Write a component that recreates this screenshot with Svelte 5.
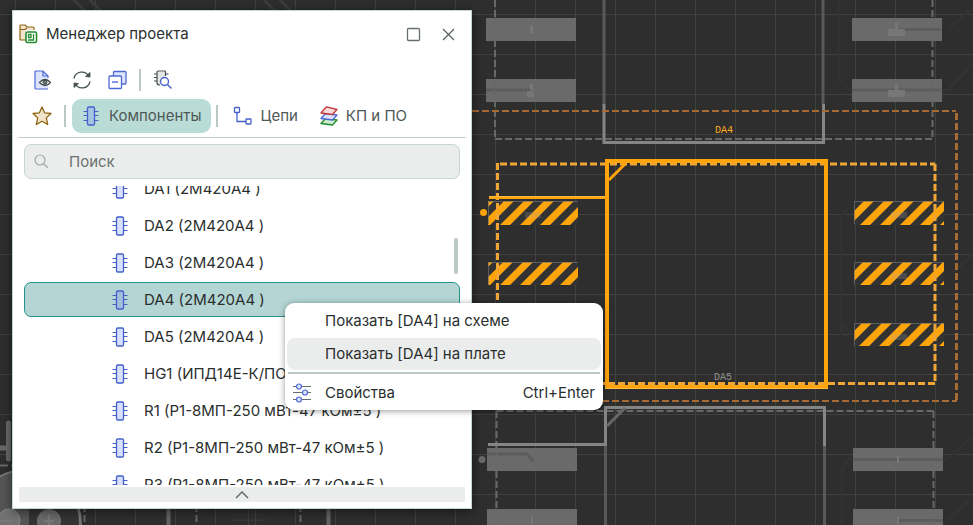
<script>
  const rows = [
    'DA1 (2М420А4 )',
    'DA2 (2М420А4 )',
    'DA3 (2М420А4 )',
    'DA4 (2М420А4 )',
    'DA5 (2М420А4 )',
    'HG1 (ИПД14Е-К/ПО )',
    'R1 (Р1-8МП-250 мВт-47 кОм±5 )',
    'R2 (Р1-8МП-250 мВт-47 кОм±5 )',
    'R3 (Р1-8МП-250 мВт-47 кОм±5 )'
  ];
  let selected = $state(3);
  let query = $state('');

  const greyPads = [
    [486, 18], [486, 79], [852, 18], [852, 79],
    [487, 448], [487, 509], [853, 448], [853, 509]
  ];
  const activePads = [[488, 201], [488, 262], [854, 201], [854, 262], [854, 323]];
</script>

{#snippet chip()}
  <svg width="16" height="20" viewBox="0 0 16 20" fill="none" stroke="#4560cb" aria-hidden="true">
    <path d="M0.5 5.5H4M0.5 9.5H4M0.5 14.5H4M12 5.5h3.5M12 9.5h3.5M12 14.5h3.5" stroke-width="1.2" />
    <rect x="4.5" y="1" width="7" height="18" rx="1.2" fill="#6f8dfa" fill-opacity=".28" stroke-width="1.3" />
  </svg>
{/snippet}

<main>
  <svg class="board" width="100%" height="100%" aria-hidden="true">
    <defs>
      <pattern id="grid" x="15" y="14" width="40" height="40" patternUnits="userSpaceOnUse">
        <path d="M0.5 0V40M0 0.5H40" stroke="#414141" />
      </pattern>
      <pattern id="hatch" width="20" height="20" patternUnits="userSpaceOnUse">
        <rect width="20" height="20" fill="#333" />
        <path d="M5 0H15L0 15V5ZM20 5V15L15 20H5Z" fill="#ffa40a" />
      </pattern>
    </defs>
    <rect width="100%" height="100%" fill="#2e2e2e" />
    <rect width="100%" height="100%" fill="url(#grid)" />

    <g fill="none" stroke="#323232" stroke-width="3">
      <path d="M839 0V80L849 90H948L973 63M948 29L973 8M841 335V215L848 208M841 325L854 335M950 275L973 254M842 525V468L850 459H948L973 436M948 520L973 497" />
      <path d="M74 0L96 22M90 0L112 22M264 0L276 12M280 0L292 12" stroke="#3d3d3d" />
    </g>

    <g>
      <path d="M0 448H8" stroke="#696969" stroke-width="5" />
      <path d="M8.5 423V459" stroke="#696969" stroke-width="5" stroke-linecap="round" />
      <path d="M0 465.500H13" stroke="#666" stroke-width="2" stroke-dasharray="8 3" />
      <circle cx="26" cy="525" r="55" fill="#555" stroke="#777" stroke-width="2" />
      <rect x="29" y="505" width="38" height="20" fill="#343434" />
      <circle cx="9" cy="520" r="11" fill="#727272" stroke="#858585" />
      <circle cx="49" cy="521" r="11.500" fill="#6a6a6a" stroke="#747474" />
      <path d="M0 521H12M49 514V525M44 521H54" stroke="#787878" stroke-width="2" />
      <path d="M67 505H77Q80 513 80 525H67Z" fill="#343434" />
      <path d="M77 505Q80 513 80 525" fill="none" stroke="#777" stroke-width="2" />
      <path d="M168.500 505V525M328.500 505V525" stroke="#636363" stroke-width="4" />
      <path d="M84.500 505V525M196.500 505V525M300.500 505V525" stroke="#666" stroke-width="2" stroke-dasharray="7 3" />
      <path d="M232 520H265M248.500 505V525" stroke="#3c3c3c" />
    </g>

    {#each greyPads as [x, y]}
      <rect {x} {y} width="90" height="23" fill="#6a6a6a" />
    {/each}
    <g fill="none" stroke="#5c5c5c" stroke-width="3">
      <path d="M486 90H531M895 29.500H941M852 90H941M487 454H527L533 461M853 459.500H943M898 520.500H943" />
    </g>
    <g fill="#777">
      <path d="M530 26h3v7h-3zM530 84h3v6h-3zM527 91h7v6h-7zM888 29h17v7h-17zM895 23h3v6h-3zM888 90h17v7h-17zM895 84h3v6h-3zM897 456h2v7h-2zM897 517h2v7h-2zM531 517h2v7h-2z" />
    </g>

    <g fill="none" stroke="#686868" stroke-width="2" stroke-dasharray="7 3">
      <path d="M495 0V138M495 139H933M932.500 0V138" />
      <path d="M496.500 411V525M496.500 411H934M933.500 411V525" />
    </g>
    <g fill="none" stroke="#595959" stroke-width="3">
      <path d="M604 0V104M823 0V104M605.500 445V525M824.500 445V525" />
    </g>
    <g fill="none" stroke="#858585" stroke-width="3">
      <path d="M604 104V142.500H823.500V104" />
      <path d="M488 444.500H605.500V407.500H824.500V446" />
      <path d="M625 408L607 426" stroke="#686868" />
    </g>
    <circle cx="482" cy="459.500" r="3.500" fill="#6a6a6a" />

    <g fill="none" stroke="#a66b32" stroke-width="2" stroke-dasharray="7 3">
      <path d="M472 111H956M472 401H957" />
      <path d="M956.500 113V401" stroke-width="3" />
    </g>

    {#each activePads as [x, y]}
      <rect {x} {y} width="90" height={y === 201 ? 24 : 23} fill="url(#hatch)" />
      <path d="M{x + 0.5} {y + 23}V{y + 0.5}H{x + 90}" fill="none" stroke="#707070" stroke-opacity=".7" />
    {/each}
    <path d="M525 212h16v6h-16zM891 212h16v6h-16zM891 273h16v6h-16zM891 334h16v6h-16z" fill="#aaa" fill-opacity=".22" />

    <g fill="none" stroke="#f0a535" stroke-width="3" stroke-dasharray="7 3">
      <path d="M500 164H935M935 164V384M497.500 163V384M498 383.500H935" />
    </g>
    <g fill="none" stroke="#ffa40a" stroke-width="3">
      <path d="M607 161H826V387H607Z" stroke-width="4" />
      <path d="M489 197.500H607M626 163L609 180" />
      <path d="M489 196.500H605M605 388.500H828" stroke="#ffb840" stroke-width="1" />
    </g>
    <circle cx="483.500" cy="212.500" r="3.500" fill="#ffa40a" />
    <text x="715" y="133" fill="#ffab24">DA4</text>
    <text x="714" y="380" fill="#929292">DA5</text>
  </svg>

  <section class="window" aria-label="Менеджер проекта">
    <header>
      <svg width="20" height="20" viewBox="0 0 20 20" fill="none" aria-hidden="true">
        <path d="M1 3V16H7V6H15V3H8L6 1H2Z" fill="#f1e4cd" stroke="none" />
        <path d="M7 16H2Q1 16 1 15V2Q1 1 2 1H6L8 3H14Q15 3 15 4V6M1 5.500H6L8 4" stroke="#8e6414" stroke-width="1.200" />
        <rect x="7" y="8" width="10.500" height="10.500" rx="1.500" fill="#fff" stroke="#248b2e" stroke-width="1.600" />
        <path d="M9.500 10.500H12V13.500H9.500ZM14.500 10V16H9" stroke="#248b2e" stroke-width="1.300" />
      </svg>
      <h1>Менеджер проекта</h1>
      <button aria-label="Развернуть">
        <svg width="15" height="15" viewBox="0 0 15 15" fill="none"><rect x="1.500" y="1.500" width="12" height="12" rx="1" stroke="#66706e" stroke-width="1.300" /></svg>
      </button>
      <button aria-label="Закрыть">
        <svg width="15" height="15" viewBox="0 0 15 15" fill="none"><path d="M2 2L13 13M13 2L2 13" stroke="#56605e" stroke-width="1.200" /></svg>
      </button>
    </header>

    <div class="tools">
      <button aria-label="Просмотр">
        <svg width="18" height="20" viewBox="0 0 18 20" fill="none">
          <path d="M2 2Q2 1 3 1H10L15 6V19H3Q2 19 2 18Z" fill="#dde4fd" />
          <path d="M15 8V6L10 1H3Q2 1 2 2V18Q2 19 3 19H15M10 1V6H15" stroke="#4d68d2" stroke-width="1.200" />
          <path d="M6.500 12.500Q12 6.500 17.500 12.500Q12 18.500 6.500 12.500Z" fill="#fff" stroke="#3d4745" stroke-width="1.300" />
          <circle cx="12" cy="12.300" r="2" fill="#727b79" stroke="#3d4745" />
        </svg>
      </button>
      <button aria-label="Обновить">
        <svg width="20" height="20" viewBox="0 0 20 20" fill="none" stroke="#46524f" stroke-width="1.300">
          <path d="M2 8.500A8 8 0 0 1 17 6.500M18 11.500A8 8 0 0 1 3 13.500" />
          <path d="M18 2.500V7L13.500 6.500ZM2 17.500V13L6.500 13.500Z" fill="#46524f" stroke-width=".8" />
        </svg>
      </button>
      <button aria-label="Свернуть все">
        <svg width="20" height="20" viewBox="0 0 20 20" fill="none" stroke="#4d68d2" stroke-width="1.300">
          <rect x="5.500" y="1.500" width="12.500" height="12.500" rx="1" fill="#dde4fd" />
          <rect x="1" y="6" width="12.500" height="12.500" rx="1" fill="#fff" />
          <path d="M4 12H10" stroke-width="1.400" />
        </svg>
      </button>
      <i></i>
      <button aria-label="Найти компонент">
        <svg width="19" height="20" viewBox="0 0 19 20" fill="none" stroke="#46524f" stroke-width="1.200">
          <path d="M4 2H12V7L8 14H4Z" fill="#e3e6e5" stroke="none" />
          <path d="M12.500 6V2Q12.500 1 11.500 1H5Q4 1 4 2V13Q4 15 7 15M1 4H4M1 7.500H4M1 11H4M12.500 4h3" />
          <circle cx="11.500" cy="11.500" r="4" fill="#fff" stroke="#4560cb" stroke-width="1.400" />
          <path d="M14.500 14.500L18.500 18.500" stroke="#4560cb" stroke-width="1.400" />
        </svg>
      </button>
    </div>

    <nav>
      <button class="star" aria-label="Избранное">
        <svg width="20" height="20" viewBox="0 0 20 20"><path d="M10 1L12.700 6.900L19 7.500L14.300 11.900L15.700 18.500L10 15.200L4.300 18.500L5.700 11.900L1 7.500L7.300 6.900Z" fill="#f0e5cc" stroke="#8e6414" stroke-width="1.300" stroke-linejoin="round" /></svg>
      </button>
      <i></i>
      <button class="tab current">{@render chip()}Компоненты</button>
      <i></i>
      <button class="tab nets">
        <svg width="20" height="20" viewBox="0 0 20 20" fill="#fff" stroke="#4560cb" stroke-width="1.300">
          <path d="M4 7V15.500H13" fill="none" />
          <rect x="1.500" y="1.500" width="5" height="5" rx=".8" />
          <rect x="13" y="13" width="5" height="5" rx=".8" />
        </svg>Цепи
      </button>
      <button class="tab">
        <svg width="18" height="20" viewBox="0 0 18 20" stroke-width="1.300" stroke-linejoin="round">
          <path d="M5.500 12.500L17 14L12.500 19L1 17.500Z" fill="#cdebd0" stroke="#248b2e" />
          <path d="M5.500 7.500L17 9L12.500 14L1 12.500Z" fill="#dbe2fd" stroke="#4d68d2" />
          <path d="M6.500 .8L17 3.500L12.500 8.500L1 7Z" fill="#fbdada" stroke="#c03b3b" />
        </svg>КП и ПО
      </button>
    </nav>

    <label class="search">
      <svg width="15" height="15" viewBox="0 0 15 15" fill="none" stroke="#a0abaa" stroke-width="1.200" aria-hidden="true"><circle cx="6" cy="6" r="5" /><path d="M9.500 9.500L14 14" /></svg>
      <input type="text" placeholder="Поиск" aria-label="Поиск" bind:value={query} />
    </label>

    <div class="list">
      <ul>
        {#each rows as row, i}
          <li>
            <button class="row" class:selected={selected === i} onclick={() => (selected = i)}>{@render chip()}{row}</button>
          </li>
        {/each}
      </ul>
      <span class="thumb"></span>
    </div>

    <button class="collapse" aria-label="Свернуть панель">
      <svg width="14" height="8" viewBox="0 0 14 8" fill="none"><path d="M1 7L7 1L13 7" stroke="#66706e" stroke-width="1.500" /></svg>
    </button>
  </section>

  <div class="menu" role="menu">
    <button role="menuitem">Показать [DA4] на схеме</button>
    <button role="menuitem" class="hover">Показать [DA4] на плате</button>
    <hr />
    <button role="menuitem">
      <svg width="20" height="20" viewBox="0 0 20 20" stroke-width="1.200" aria-hidden="true">
        <path d="M1 3.500H19M1 9.500H19M1 16.500H19" stroke="#66706e" />
        <g fill="#dbe2fd" stroke="#4d68d2"><circle cx="7" cy="3.500" r="2.500" /><circle cx="13" cy="9.500" r="2.500" /><circle cx="7" cy="16.500" r="2.500" /></g>
      </svg>
      <span>Свойства</span>
      <kbd>Ctrl+Enter</kbd>
    </button>
  </div>
</main>

<style>
  main {
    position: relative;
    height: 100vh;
    overflow: hidden;
    background: #2e2e2e;
    color: #2a2f2e;
    font: 400 15px/20px Inter, "Noto Sans", sans-serif;
  }
  button {
    margin: 0;
    padding: 0;
    border: 0;
    background: none;
    color: inherit;
    font: inherit;
    display: flex;
    align-items: center;
    text-align: left;
  }
  svg { flex: none; display: block; }
  .board { position: absolute; inset: 0; }
  .board text { font: 10px "Liberation Mono", monospace; }

  .window {
    position: absolute;
    left: 12px;
    top: 10px;
    bottom: 16px;
    width: 460px;
    box-sizing: border-box;
    display: flex;
    flex-direction: column;
    padding: 0 6px 6px;
    border: 1px solid #c4d6d0;
    background: #fff;
    box-shadow: 0 2px 10px #0008;
  }
  header {
    display: flex;
    align-items: center;
    gap: 20px;
    height: 46px;
    padding: 0 9px 0 0;
  }
  h1 {
    flex: 1;
    margin: 0 0 0 -13px;
    font-size: 15px;
    font-weight: 400;
  }
  .tools {
    display: flex;
    align-items: center;
    gap: 16px;
    height: 38px;
    margin-top: 4px;
    padding-left: 14px;
  }
  i { width: 2px; height: 22px; background: #bcc8c8; }
  .tools i { margin: 0 -4px 0 -5px; }
  .tools button:nth-child(1) { margin-right: 5px; }
  nav {
    display: flex;
    align-items: center;
    height: 34px;
    margin: 0 -1px;
    padding: 0 0 4px 14px;
    border-bottom: 1px solid #c4d0cd;
    color: #4e5856;
  }
  .star { margin-right: 12px; }
  .tab {
    gap: 8px;
    height: 34px;
    padding: 0 8px;
  }
  .current {
    gap: 10px;
    margin: 0 5px 0 6px;
    padding: 0 9px 0 11px;
    border-radius: 9px;
    background: #badcd7;
  }
  .nets { margin: 0 6px 0 7px; }
  .search {
    display: flex;
    align-items: center;
    gap: 20px;
    height: 33px;
    margin: 6px 5px 0;
    padding: 0 9px;
    border: 1px solid #c7d6d2;
    border-radius: 7px;
    background: #ebeded;
  }
  input {
    flex: 1;
    min-width: 0;
    padding: 0;
    border: 0;
    outline: 0;
    background: none;
    color: #2a2f2e;
    font: inherit;
  }
  input::placeholder { color: #6c7170; opacity: 1; }
  .list {
    position: relative;
    flex: 1;
    min-height: 0;
    margin: 7px 5px 2px;
    overflow: hidden;
  }
  ul {
    display: flex;
    flex-direction: column;
    gap: 2px;
    margin: -15px 0 0;
    padding: 0;
    list-style: none;
  }
  .row {
    box-sizing: border-box;
    width: 100%;
    height: 35px;
    gap: 16px;
    padding-left: 87px;
    border: 1px solid transparent;
    border-radius: 7px;
    white-space: nowrap;
  }
  .selected { border-color: #26938b; background: #b3d5d3; }
  .thumb {
    position: absolute;
    right: 2px;
    top: 52px;
    width: 4px;
    height: 36px;
    border-radius: 2px;
    background: #bcc8c8;
  }
  .collapse {
    justify-content: center;
    height: 15px;
    background: #ebeded;
  }

  .menu {
    position: absolute;
    left: 285px;
    top: 303px;
    width: 318px;
    box-sizing: border-box;
    display: flex;
    flex-direction: column;
    gap: 1px;
    padding: 2px 2px 1px;
    border-radius: 9px;
    background: #fff;
    box-shadow: 0 1px 6px #0006;
  }
  .menu button {
    height: 32px;
    padding: 0 6px 0 38px;
    border-radius: 8px;
  }
  .menu .hover { background: #ebeded; }
  .menu button:last-child { gap: 13px; padding-left: 5px; }
  .menu hr {
    width: calc(100% - 2px);
    height: 2px;
    margin: 1px auto 2px;
    border: 0;
    background: #bcc8c8;
  }
  .menu span { flex: 1; }
  kbd { font: inherit; }
</style>
